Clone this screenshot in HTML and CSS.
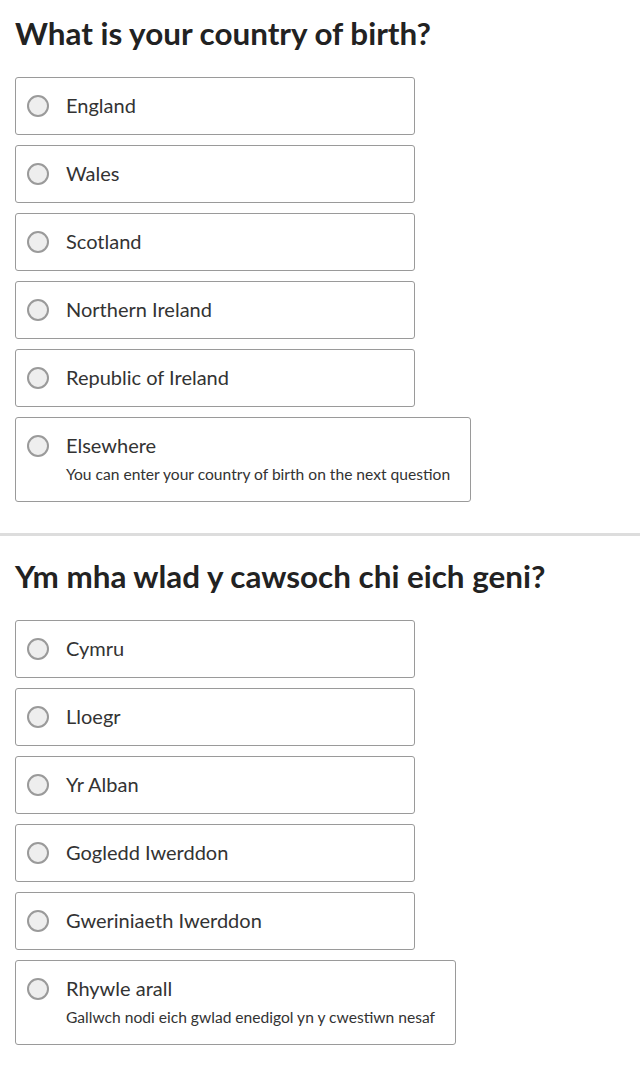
FILE: index.html
```html
<!DOCTYPE html>
<html lang="en">
<head>
<meta charset="utf-8">
<title>Country of birth</title>
<link rel="stylesheet" href="styles.css">
</head>
<body>
<section class="question">
  <h1 class="question-title">What is your country of birth?</h1>
  <div class="options">
    <label class="option"><input type="radio" name="cob" class="radio"><span class="option-text"><span class="option-label">England</span></span></label>
    <label class="option"><input type="radio" name="cob" class="radio"><span class="option-text"><span class="option-label">Wales</span></span></label>
    <label class="option"><input type="radio" name="cob" class="radio"><span class="option-text"><span class="option-label">Scotland</span></span></label>
    <label class="option"><input type="radio" name="cob" class="radio"><span class="option-text"><span class="option-label">Northern Ireland</span></span></label>
    <label class="option"><input type="radio" name="cob" class="radio"><span class="option-text"><span class="option-label">Republic of Ireland</span></span></label>
    <label class="option"><input type="radio" name="cob" class="radio"><span class="option-text"><span class="option-label">Elsewhere</span><span class="option-desc">You can enter your country of birth on the next question</span></span></label>
  </div>
</section>
<hr class="divider">
<section class="question question-cy" lang="cy">
  <h1 class="question-title">Ym mha wlad y cawsoch chi eich geni?</h1>
  <div class="options">
    <label class="option"><input type="radio" name="cob-cy" class="radio"><span class="option-text"><span class="option-label">Cymru</span></span></label>
    <label class="option"><input type="radio" name="cob-cy" class="radio"><span class="option-text"><span class="option-label">Lloegr</span></span></label>
    <label class="option"><input type="radio" name="cob-cy" class="radio"><span class="option-text"><span class="option-label">Yr Alban</span></span></label>
    <label class="option"><input type="radio" name="cob-cy" class="radio"><span class="option-text"><span class="option-label">Gogledd Iwerddon</span></span></label>
    <label class="option"><input type="radio" name="cob-cy" class="radio"><span class="option-text"><span class="option-label">Gweriniaeth Iwerddon</span></span></label>
    <label class="option"><input type="radio" name="cob-cy" class="radio"><span class="option-text"><span class="option-label">Rhywle arall</span><span class="option-desc">Gallwch nodi eich gwlad enedigol yn y cwestiwn nesaf</span></span></label>
  </div>
</section>
</body>
</html>
```
FILE: styles.css
```css
* { box-sizing: border-box; }
html, body { margin: 0; padding: 0; background: #fff; }
body {
  font-family: Lato, "Liberation Sans", sans-serif;
  color: #333;
}
.question {
  padding: 13px 15px 31px;
}
.question-cy {
  padding-top: 20px;
}
.question-title {
  margin: 0 0 24px;
  font-size: 31.4px;
  line-height: 40px;
  font-weight: 700;
  color: #222;
}
.options {
  display: flex;
  flex-direction: column;
  align-items: flex-start;
  gap: 10px;
}
.option {
  display: flex;
  align-items: flex-start;
  min-width: 400px;
  padding: 13px 20px 15px 11px;
  border: 1px solid #9a9a9a;
  border-radius: 3px;
  background: #fff;
  cursor: pointer;
}
.radio {
  appearance: none;
  -webkit-appearance: none;
  flex: none;
  width: 22px;
  height: 22px;
  margin: 4px 17px 0 0;
  border: 2px solid #9a9a9a;
  border-radius: 50%;
  background: #eee;
}
.option-text {
  display: flex;
  flex-direction: column;
}
.option-label {
  font-size: 20px;
  line-height: 28px;
  color: #333;
}
.option-desc {
  margin-top: 3px;
  font-size: 15.6px;
  line-height: 24px;
  color: #333;
}
.divider {
  margin: 0;
  border: 0;
  height: 3px;
  background: #ddd;
}
```
